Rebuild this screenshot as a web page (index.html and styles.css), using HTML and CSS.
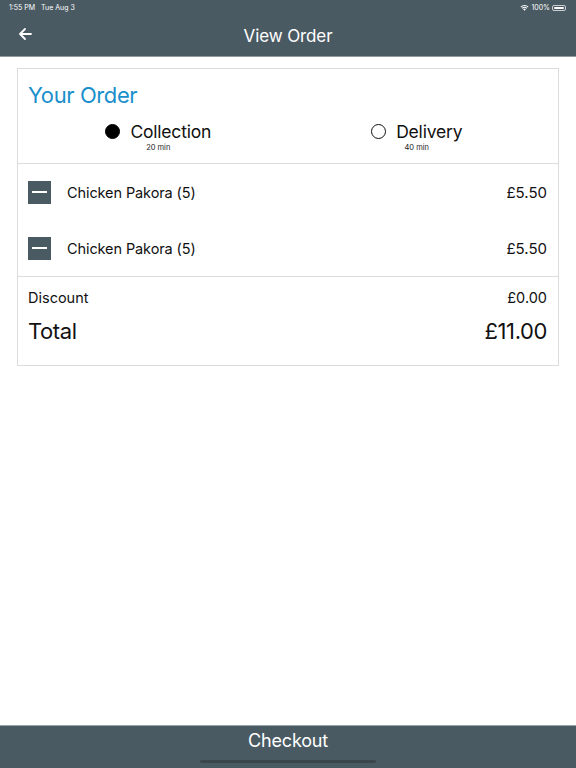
FILE: index.html
```html
<!DOCTYPE html>
<html>
<head>
<meta charset="utf-8">
<link rel="stylesheet" href="styles.css">
</head>
<body>
<div class="page">
  <header class="header">
    <div class="status">
      <span class="status-left">1:55 PM&nbsp;&nbsp; Tue Aug 3</span>
      <span class="status-right">
        <svg class="wifi" width="9" height="7" viewBox="0 0 18 14"><path d="M9 13.5 L6.2 10.6 A4 4 0 0 1 11.8 10.6 Z M3.6 8 A7.6 7.6 0 0 1 14.4 8 L13 9.4 A5.6 5.6 0 0 0 5 9.4 Z M1 5.4 A11.3 11.3 0 0 1 17 5.4 L15.6 6.8 A9.3 9.3 0 0 0 2.4 6.8 Z" fill="#fff"/></svg>
        <span>100%</span>
        <span class="battery"><span class="battery-fill"></span></span>
      </span>
    </div>
    <div class="nav">
      <svg class="back" width="14" height="14" viewBox="0 0 14 14"><path d="M13 7 H2 M7 2 L2 7 L7 12" fill="none" stroke="#fff" stroke-width="1.8" stroke-linecap="round" stroke-linejoin="round"/></svg>
      <div class="nav-title">View Order</div>
    </div>
  </header>
  <main class="main">
    <section class="card">
      <div class="card-head">
        <h1 class="title">Your Order</h1>
        <div class="options">
          <div class="option">
            <div class="option-row"><span class="radio radio-on"></span><span class="option-label">Collection</span></div>
            <div class="option-time">20 min</div>
          </div>
          <div class="option">
            <div class="option-row"><span class="radio"></span><span class="option-label">Delivery</span></div>
            <div class="option-time">40 min</div>
          </div>
        </div>
      </div>
      <div class="items">
        <div class="item">
          <span class="minus"><span class="minus-bar"></span></span>
          <span class="item-name">Chicken Pakora (5)</span>
          <span class="item-price">£5.50</span>
        </div>
        <div class="item">
          <span class="minus"><span class="minus-bar"></span></span>
          <span class="item-name">Chicken Pakora (5)</span>
          <span class="item-price">£5.50</span>
        </div>
      </div>
      <div class="totals">
        <div class="line discount"><span>Discount</span><span>£0.00</span></div>
        <div class="line total"><span>Total</span><span>£11.00</span></div>
      </div>
    </section>
  </main>
  <footer class="footer">
    <div class="checkout">Checkout</div>
    <div class="home-indicator"></div>
  </footer>
</div>
</body>
</html>
```
FILE: styles.css
```css
* { box-sizing: border-box; }
html, body { margin: 0; padding: 0; }
body {
  font-family: "Inter", "Liberation Sans", sans-serif;
  color: #111;
  background: #fff;
}
.page {
  height: 768px;
  display: flex;
  flex-direction: column;
}
.header {
  background: #4a5a63;
  color: #fff;
  height: 57px;
  border-bottom: 1px solid #8f9ba1;
}
.status {
  height: 15px;
  display: flex;
  justify-content: space-between;
  align-items: center;
  padding: 0 10px 0 9px;
  font-size: 7px;
  line-height: 15px;
}
.status-right {
  display: flex;
  align-items: center;
  gap: 2px;
}
.battery {
  width: 14px;
  height: 6px;
  border: 1px solid rgba(255,255,255,0.7);
  border-radius: 2px;
  padding: 1px;
  display: flex;
}
.battery-fill { flex: 1; background: #fff; border-radius: 1px; }
.nav {
  height: 41px;
  display: flex;
  align-items: center;
  justify-content: center;
  position: relative;
}
.back {
  position: absolute;
  left: 18px;
  top: 12px;
}
.nav-title {
  font-size: 17px;
  letter-spacing: -0.1px;
}
.main {
  flex: 1;
  padding: 11px 17px 0;
}
.card {
  border: 1px solid #dcdcdc;
}
.card-head {
  padding: 13px 11px 10px 10px;
  border-bottom: 1px solid #dcdcdc;
}
.title {
  margin: 0;
  font-weight: 400;
  font-size: 22px;
  line-height: 26px;
  color: #1b8fcb;
  letter-spacing: -0.4px;
}
.options {
  display: grid;
  grid-template-columns: 1fr 1fr;
  margin-top: 12px;
  padding: 0 1px;
}
.option {
  display: flex;
  flex-direction: column;
  align-items: center;
}
.option-row {
  display: flex;
  align-items: center;
  gap: 10px;
  height: 22px;
}
.radio {
  width: 15px;
  height: 15px;
  border-radius: 50%;
  border: 1.5px solid #111;
}
.radio-on { background: #000; border-color: #000; }
.option-label {
  font-size: 17.5px;
  letter-spacing: -0.2px;
}
.option-time {
  font-size: 7.5px;
  line-height: 10px;
  padding-top: 1px;
  color: #222;
}
.item {
  height: 56px;
  display: flex;
  align-items: center;
  padding: 0 11px 0 10px;
}
.items { border-bottom: 1px solid #dcdcdc; }
.minus {
  width: 23px;
  height: 23px;
  background: #4a5a63;
  display: flex;
  align-items: center;
  justify-content: center;
}
.minus-bar {
  width: 15px;
  height: 2px;
  background: #fff;
}
.item-name {
  margin-left: 16px;
  font-size: 14.5px;
  flex: 1;
  letter-spacing: -0.1px;
}
.item-price {
  font-size: 15px;
}
.totals {
  padding: 11px 11px 20px 10px;
}
.line {
  display: flex;
  justify-content: space-between;
  align-items: center;
}
.discount {
  font-size: 14.5px;
  line-height: 20px;
}
.total {
  margin-top: 9px;
  font-size: 22px;
  line-height: 28px;
  letter-spacing: -0.4px;
}
.footer {
  height: 43px;
  background: #4a5a63;
  border-top: 1px solid #9aa5ab;
  color: #fff;
  display: flex;
  flex-direction: column;
  align-items: center;
  padding-top: 4px;
}
.checkout {
  font-size: 18px;
  line-height: 22px;
  letter-spacing: -0.2px;
}
.home-indicator {
  margin-top: 8px;
  width: 176px;
  height: 3px;
  border-radius: 2px;
  background: #3a454c;
}
```
